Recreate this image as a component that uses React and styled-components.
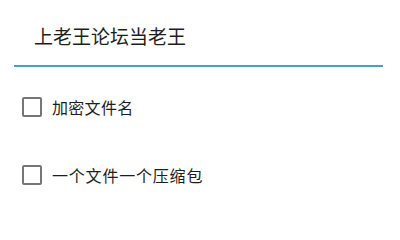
import React from 'react';
import styled, { createGlobalStyle } from 'styled-components';

const GlobalStyle = createGlobalStyle`
  html, body {
    margin: 0;
    padding: 0;
    background: #ffffff;
  }
  body {
    font-family: "Noto Sans CJK SC", "Noto Sans", sans-serif;
  }
`;

const Page = styled.div`
  width: 400px;
  height: 230px;
  box-sizing: border-box;
  padding: 0 17px 0 14px;
  overflow: hidden;
`;

const Field = styled.div`
  box-sizing: border-box;
  height: 67px;
  padding: 24px 0 17px 20px;
  border-bottom: 2px solid #4a9bd4;
  font-size: 19px;
  line-height: 24px;
  color: #1e1e1e;
`;

const Options = styled.div`
  display: flex;
  flex-direction: column;
  gap: 48px;
  margin-top: 30px;
  padding-left: 8px;
`;

const Option = styled.label`
  display: flex;
  align-items: center;
  height: 20px;
  cursor: pointer;
`;

const Box = styled.span`
  box-sizing: border-box;
  width: 20px;
  height: 20px;
  border: 2px solid #767676;
  border-radius: 2px;
  flex-shrink: 0;
`;

const Label = styled.span`
  margin-left: 10px;
  font-size: 16px;
  line-height: 20px;
  color: #1e1e1e;
  letter-spacing: ${p => p.$spacing || 0}px;
`;

const options = [
  { text: '加密文件名', spacing: 0.3 },
  { text: '一个文件一个压缩包', spacing: 0.8 },
];

export default function App() {
  return (
    <>
      <GlobalStyle />
      <Page>
        <Field>上老王论坛当老王</Field>
        <Options>
          {options.map(o => (
            <Option key={o.text}>
              <Box />
              <Label $spacing={o.spacing}>{o.text}</Label>
            </Option>
          ))}
        </Options>
      </Page>
    </>
  );
}
